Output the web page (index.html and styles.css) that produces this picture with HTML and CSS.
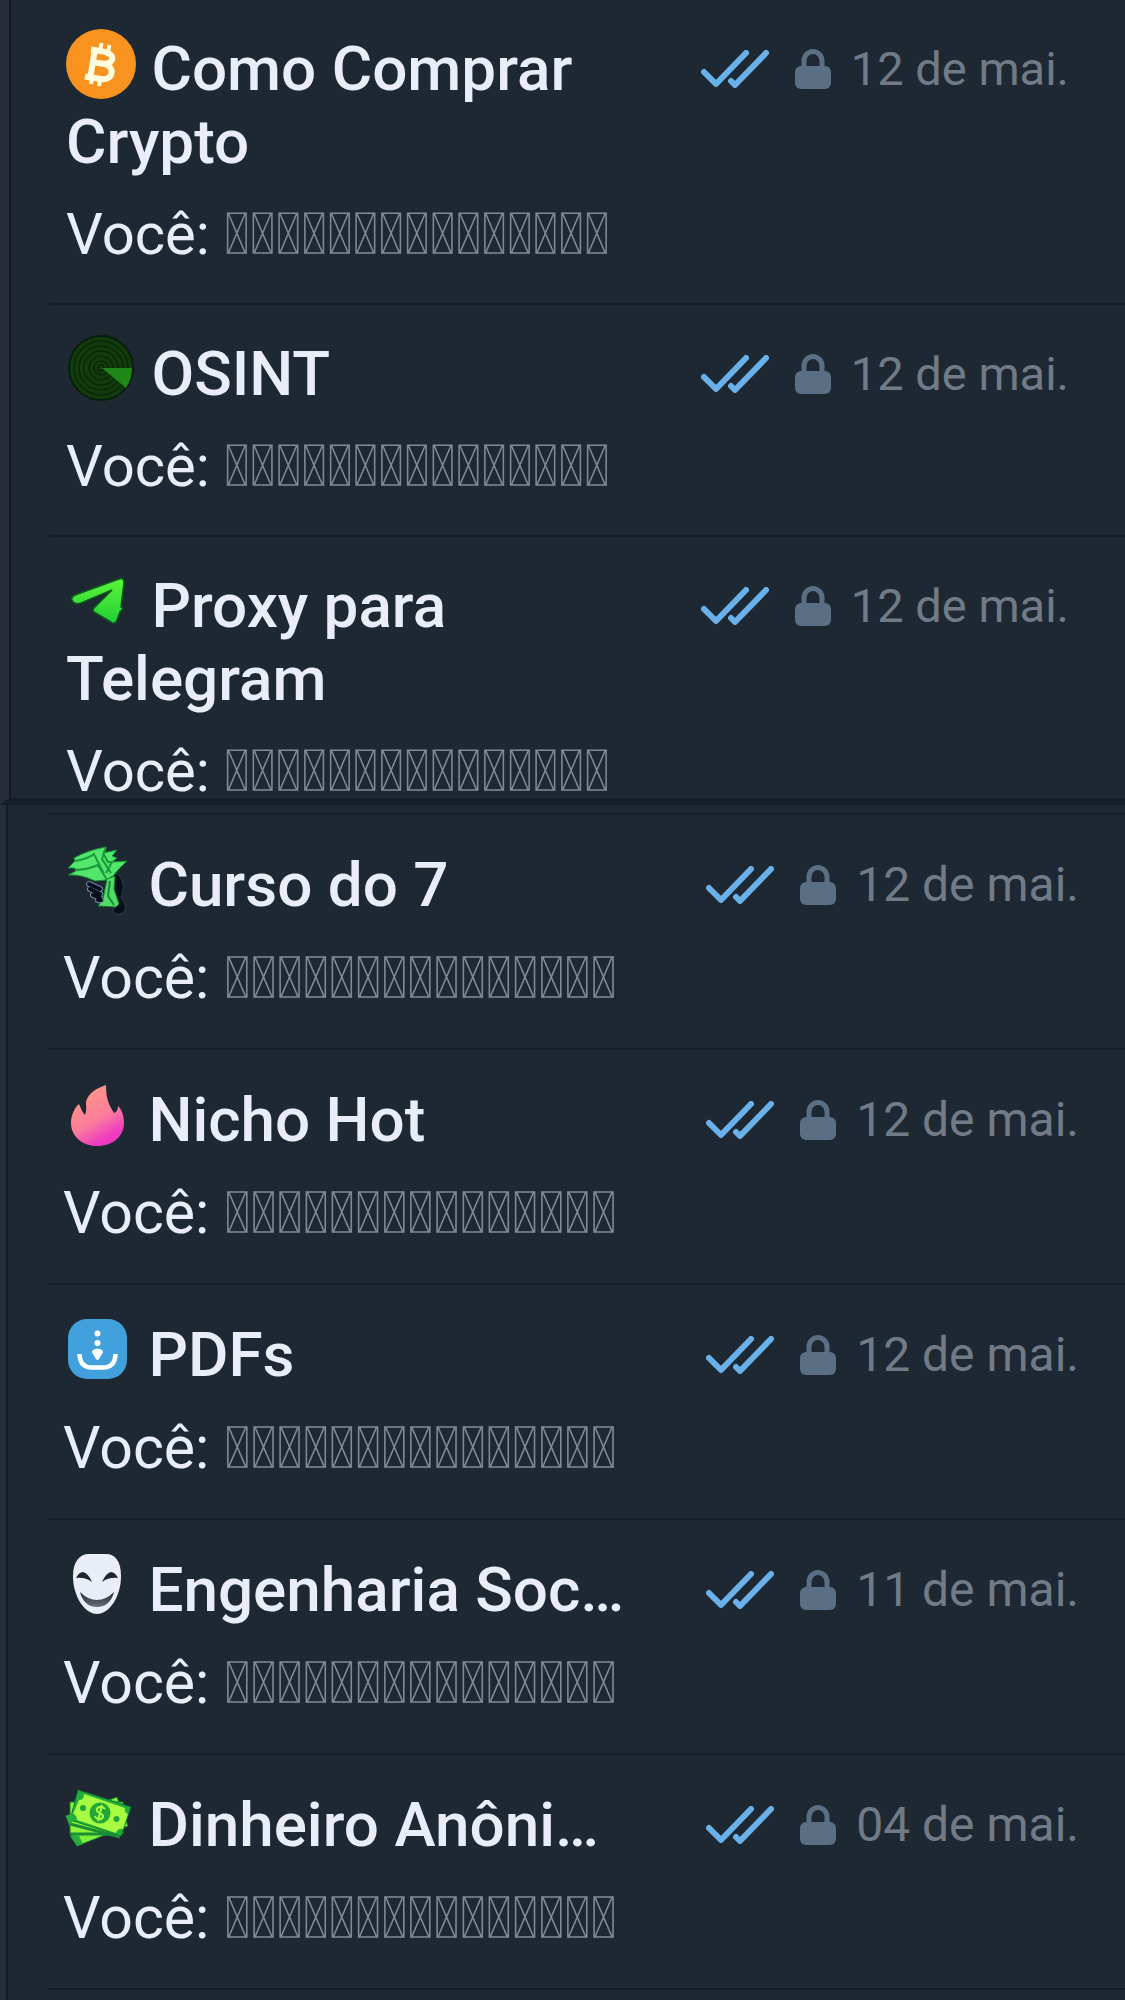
FILE: index.html
```html
<!DOCTYPE html>
<html lang="pt-BR">
<head>
<meta charset="utf-8">
<meta name="viewport" content="width=device-width, initial-scale=1">
<title>Conversas</title>
<link rel="stylesheet" href="styles.css">
</head>
<body>
<svg class="defs" aria-hidden="true">
  <defs>
    <symbol id="checks" viewBox="0 0 68 38">
      <path d="M3 22 15 34 45 3M30 31 34 35 65 3" fill="none" stroke="#69b1e8" stroke-width="6" stroke-linecap="round" stroke-linejoin="round"/>
    </symbol>
    <symbol id="lock" viewBox="0 0 36 40">
      <path d="M9 20V12a9 9.500 0 0 1 18 0v8" fill="none" stroke="#5b6f84" stroke-width="5"/>
      <rect y="17" width="36" height="23" rx="6" fill="#5b6f84"/>
    </symbol>
    <linearGradient id="planeFill" x1="0" y1="0" x2="0" y2="1"><stop offset="0" stop-color="#5cf53a"/><stop offset="1" stop-color="#22cf35"/></linearGradient>
    <linearGradient id="flameFill" x1=".3" y1=".1" x2=".75" y2="1"><stop offset="0" stop-color="#ff9486"/><stop offset=".5" stop-color="#fb7d9c"/><stop offset=".85" stop-color="#ee3cc0"/></linearGradient>
    <linearGradient id="smileFill" x1="0" y1="0" x2="0" y2="1"><stop offset="0" stop-color="#1e2733"/><stop offset="1" stop-color="#6b7079"/></linearGradient>
  </defs>
</svg>
<main>
  <ul class="chats chats-top">
    <li class="chat">
      <div class="head">
        <h2 class="title"><svg class="emoji" viewBox="0 0 70 70" aria-hidden="true"><circle cx="35" cy="35" r="35" fill="#f7931e"/><g fill="none" stroke="#fffbe0"><path d="M29 20 24 50M25 20.500 37 22.500C51 25 48 36 36 34.500L28 33.500M36 34.500C51 37 47 52 35 50L19 47.500" stroke-width="6"/><path d="M34 22 35.500 14M42 24 43.500 16M25 55 26.500 47M33 57 34.500 49" stroke-width="4"/></g></svg> Como Comprar Crypto</h2>
        <div class="meta"><svg class="checks" role="img" aria-label="Lida"><use href="#checks"/></svg><svg class="lock" aria-hidden="true"><use href="#lock"/></svg><time>12 de mai.</time></div>
      </div>
      <p class="preview">Você: <span class="hidden-text">&#x10F000;&#x10F000;&#x10F000;&#x10F000;&#x10F000;&#x10F000;&#x10F000;&#x10F000;&#x10F000;&#x10F000;&#x10F000;&#x10F000;&#x10F000;&#x10F000;&#x10F000;</span></p>
    </li>
    <li class="chat">
      <div class="head">
        <h2 class="title"><svg class="emoji" viewBox="0 0 70 70" aria-hidden="true"><circle cx="35" cy="34" r="32" fill="#123c0c" stroke="#06200d" stroke-width="2"/><g fill="none" stroke="#0a2809" stroke-width="1.500"><circle cx="35" cy="34" r="27"/><circle cx="35" cy="34" r="22"/><circle cx="35" cy="34" r="17"/><circle cx="35" cy="34" r="12"/><circle cx="35" cy="34" r="7"/><circle cx="35" cy="34" r="3"/></g><path d="M36 34H66Q66 45 60 54Z" fill="#1f8717"/></svg> OSINT</h2>
        <div class="meta"><svg class="checks" role="img" aria-label="Lida"><use href="#checks"/></svg><svg class="lock" aria-hidden="true"><use href="#lock"/></svg><time>12 de mai.</time></div>
      </div>
      <p class="preview">Você: <span class="hidden-text">&#x10F000;&#x10F000;&#x10F000;&#x10F000;&#x10F000;&#x10F000;&#x10F000;&#x10F000;&#x10F000;&#x10F000;&#x10F000;&#x10F000;&#x10F000;&#x10F000;&#x10F000;</span></p>
    </li>
    <li class="chat">
      <div class="head">
        <h2 class="title"><svg class="emoji" viewBox="0 0 70 70" aria-hidden="true"><path d="M6 34Q5 31 9 29L53 13Q58 11 58 17L55 41 57 43 54 46 51 54Q49 59 45 56L28 46Q26 44 29 41L46 24 15 37Q8 39 6 34Z" fill="url(#planeFill)" stroke="#0c5b1b" stroke-width="1.500"/></svg> Proxy para Telegram</h2>
        <div class="meta"><svg class="checks" role="img" aria-label="Lida"><use href="#checks"/></svg><svg class="lock" aria-hidden="true"><use href="#lock"/></svg><time>12 de mai.</time></div>
      </div>
      <p class="preview">Você: <span class="hidden-text">&#x10F000;&#x10F000;&#x10F000;&#x10F000;&#x10F000;&#x10F000;&#x10F000;&#x10F000;&#x10F000;&#x10F000;&#x10F000;&#x10F000;&#x10F000;&#x10F000;&#x10F000;</span></p>
    </li>
  </ul>
  <ul class="chats chats-bottom">
    <li class="chat">
      <div class="head">
        <h2 class="title"><svg class="emoji" viewBox="0 0 70 70" aria-hidden="true"><path d="M45 32Q50 26 56 30 61 36 60 45L58 53Q64 60 62 66 56 72 50 67L52 59 46 52Z" fill="#070f1b" stroke="#2a3b50"/><path d="M11 13Q25 5 43 2L40 8 54 5 49 11 54 13 49 17 64 16Q55 24 50 31L43 35 32 36Q18 29 5 30L15 25Q10 22 5 23L12 16Z" fill="#54e66c" stroke="#168b35"/><path d="M12 16Q25 14 31 9L41 29M43 2 39 14 48 28M12 25Q24 25 35 20L44 35M40 8 45 17 49 17 43 28" fill="none" stroke="#1b9a3d" stroke-width="2"/><path d="M44 34 52 31 51 44 56 59 53 62 35 61 40 54Z" fill="#50dc67" stroke="#147d31"/><path d="M47 36 45 51 51 60" fill="none" stroke="#178a38" stroke-width="2"/><g fill="none" stroke="#7286a0" stroke-width="6" stroke-linecap="round"><path d="M26 39 37 44M27 44 37 49M30 50 37 53M35 55 38 55"/></g><g fill="none" stroke="#070f1b" stroke-width="4" stroke-linecap="round"><path d="M26 39 37 44M27 44 37 49M30 50 37 53M35 55 38 55"/></g></svg> Curso do 7</h2>
        <div class="meta"><svg class="checks" role="img" aria-label="Lida"><use href="#checks"/></svg><svg class="lock" aria-hidden="true"><use href="#lock"/></svg><time>12 de mai.</time></div>
      </div>
      <p class="preview">Você: <span class="hidden-text">&#x10F000;&#x10F000;&#x10F000;&#x10F000;&#x10F000;&#x10F000;&#x10F000;&#x10F000;&#x10F000;&#x10F000;&#x10F000;&#x10F000;&#x10F000;&#x10F000;&#x10F000;</span></p>
    </li>
    <li class="chat">
      <div class="head">
        <h2 class="title"><svg class="emoji" viewBox="0 0 70 70" aria-hidden="true"><path d="M43 5C43 19 46 25 51 33 54 32 55 29 55 26 59 30 61 36 61 43 61 57 49 66 34 66 19 66 8 56 8 43 8 35 12 27 16 24 18 29 20 33 22 35 24 30 23 27 23 22 25 13 34 8 43 5Z" fill="url(#flameFill)"/></svg> Nicho Hot</h2>
        <div class="meta"><svg class="checks" role="img" aria-label="Lida"><use href="#checks"/></svg><svg class="lock" aria-hidden="true"><use href="#lock"/></svg><time>12 de mai.</time></div>
      </div>
      <p class="preview">Você: <span class="hidden-text">&#x10F000;&#x10F000;&#x10F000;&#x10F000;&#x10F000;&#x10F000;&#x10F000;&#x10F000;&#x10F000;&#x10F000;&#x10F000;&#x10F000;&#x10F000;&#x10F000;&#x10F000;</span></p>
    </li>
    <li class="chat">
      <div class="head">
        <h2 class="title"><svg class="emoji" viewBox="0 0 70 70" aria-hidden="true"><rect x="5" y="4" width="59" height="60" rx="19" fill="#42a0dc"/><g fill="#fff"><circle cx="34.500" cy="18.500" r="3"/><circle cx="34.500" cy="28" r="3"/><path d="M30 35Q34.500 32 39 35 41 37 39 39L36 44Q34.500 46 33 44L30 39Q28 37 30 35Z"/></g><path d="M16.500 39Q17 52.500 29 52.500H40Q52 52.500 52.500 39" fill="none" stroke="#fff" stroke-width="4.500"/></svg> PDFs</h2>
        <div class="meta"><svg class="checks" role="img" aria-label="Lida"><use href="#checks"/></svg><svg class="lock" aria-hidden="true"><use href="#lock"/></svg><time>12 de mai.</time></div>
      </div>
      <p class="preview">Você: <span class="hidden-text">&#x10F000;&#x10F000;&#x10F000;&#x10F000;&#x10F000;&#x10F000;&#x10F000;&#x10F000;&#x10F000;&#x10F000;&#x10F000;&#x10F000;&#x10F000;&#x10F000;&#x10F000;</span></p>
    </li>
    <li class="chat">
      <div class="head">
        <h2 class="title"><svg class="emoji" viewBox="0 0 70 70" aria-hidden="true"><path d="M10 26C10 11 17 4 26 4H43C52 4 58 11 58 26 58 47 46 64 34 64 22 64 10 47 10 26Z" fill="#e9edf6"/><path d="M13 28Q16 22 20 22 25 23 29 32 22 27 13 28ZM55 28Q52 22 48 22 43 23 39 32 46 27 55 28Z" fill="#1c2531"/><path d="M17 42Q25 50 34 50 43 50 51 42 47 57 34 57 21 57 17 42Z" fill="url(#smileFill)"/></svg> Engenharia Soc…</h2>
        <div class="meta"><svg class="checks" role="img" aria-label="Lida"><use href="#checks"/></svg><svg class="lock" aria-hidden="true"><use href="#lock"/></svg><time>11 de mai.</time></div>
      </div>
      <p class="preview">Você: <span class="hidden-text">&#x10F000;&#x10F000;&#x10F000;&#x10F000;&#x10F000;&#x10F000;&#x10F000;&#x10F000;&#x10F000;&#x10F000;&#x10F000;&#x10F000;&#x10F000;&#x10F000;&#x10F000;</span></p>
    </li>
    <li class="chat">
      <div class="head">
        <h2 class="title"><svg class="emoji" viewBox="0 0 70 70" aria-hidden="true"><g stroke="#137a2f"><path d="M3 31 54 12 65 41 14 61Z" fill="#7df03a"/><path d="M7 17H60V49H7Z" fill="#8cf53a"/><path d="M15 5 68 22 58 51 7 35Z" fill="#1fae39"/></g><path d="M21 9 62 23Q61 28 65 29L60 44Q55 43 53 48L14 35Q14 30 10 29L16 15Q21 15 21 9Z" fill="#a7fb42"/><path d="M7 39 57 52" stroke="#1b8e34" stroke-width="3"/><path d="M7 49H48" stroke="#1b8e34" stroke-width="3"/><circle cx="37" cy="28" r="10.500" fill="#24a637"/><circle cx="20" cy="23" r="3" fill="#24a637"/><circle cx="53.500" cy="34" r="3" fill="#24a637"/><path d="M42 24C38 20 33 22 34 26 35 29 41 28 40 32 38 36 33 34 32 31M39 20 35 36" fill="none" stroke="#a7fb42" stroke-width="2"/><path d="M3 31 9 29 10 36 7 39ZM7 51 15 49 20 59 14 61Z" fill="#27ad3c"/></svg> Dinheiro Anôni…</h2>
        <div class="meta"><svg class="checks" role="img" aria-label="Lida"><use href="#checks"/></svg><svg class="lock" aria-hidden="true"><use href="#lock"/></svg><time>04 de mai.</time></div>
      </div>
      <p class="preview">Você: <span class="hidden-text">&#x10F000;&#x10F000;&#x10F000;&#x10F000;&#x10F000;&#x10F000;&#x10F000;&#x10F000;&#x10F000;&#x10F000;&#x10F000;&#x10F000;&#x10F000;&#x10F000;&#x10F000;</span></p>
    </li>
  </ul>
</main>
</body>
</html>
```
FILE: styles.css
```css
* {
  box-sizing: border-box;
}

body {
  margin: 0;
  background: #1e2833;
  color: #e8edf7;
  font-family: Roboto, sans-serif;
}

.defs {
  position: absolute;
  width: 0;
  height: 0;
}

.chats {
  margin: 0;
  list-style: none;
  border-left: 9px solid #262c38;
  box-shadow: inset 2px 0 #111a26;
}

.chats-top {
  padding: 0 0 0 42px;
  border-bottom: 7px solid #141d28;
}

.chats-bottom {
  border-left-width: 6px;
  padding: 8px 0 10px 42px;
}

.chat {
  padding: 32px 56px 42px 15px;
  border-bottom: 2px solid #151e29;
}

.chats-top .chat:last-child {
  padding-bottom: 0;
  border-bottom: 0;
}

.chats-bottom .chat {
  padding: 33px 46px 43px 15px;
}

.chats-bottom .chat:first-child {
  border-top: 2px solid #151e29;
}

.head {
  display: flex;
  justify-content: space-between;
  align-items: flex-start;
  gap: 56px;
}

.title {
  margin: 0;
  flex: 1;
  font-size: 62px;
  line-height: 73px;
  font-weight: 500;
}

.emoji {
  width: 70px;
  height: 70px;
  margin-top: -16px;
  vertical-align: -9px;
  overflow: visible;
}

.meta {
  display: flex;
  align-items: center;
  height: 73px;
  color: #717b88;
  font-size: 47px;
}

.chats-bottom .meta {
  font-size: 48px;
}

.checks {
  width: 68px;
  height: 38px;
  margin-right: 26px;
}

.lock {
  width: 36px;
  height: 40px;
  margin-right: 20px;
}

.preview {
  margin: 29px 0 0;
  font-size: 58px;
  line-height: 54px;
  white-space: nowrap;
}

.chats-bottom .preview {
  margin-top: 30px;
  font-size: 59px;
}

.hidden-text {
  color: #7f8a96;
}
```
